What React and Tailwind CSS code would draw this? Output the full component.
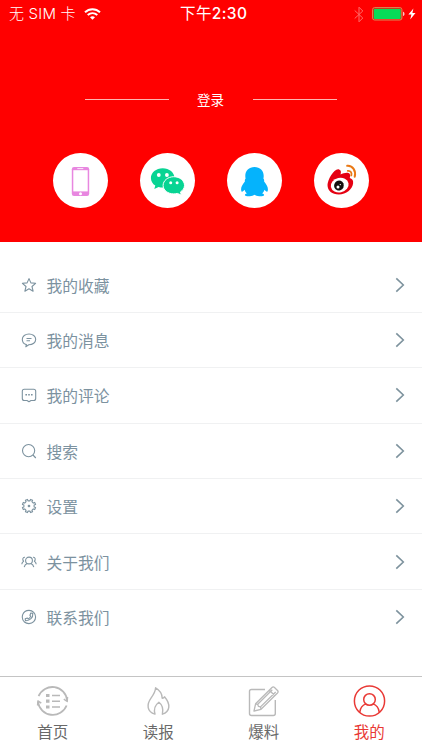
import React from "react";

const font = "font-['Liberation_Sans','Noto_Sans_CJK_SC',sans-serif]";

function StatusBar() {
  return (
    <div className="relative flex h-7 items-center justify-between pl-[9px] pr-[6px] text-white">
      <div className="flex items-center gap-2">
        <span className="whitespace-pre font-['Inter','Noto_Sans_CJK_SC',sans-serif] text-[15px] font-light leading-7 tracking-[0.2px]">无 SIM 卡</span>
        <svg width="17" height="12" viewBox="0 0 17 12" fill="none" stroke="white" strokeWidth="2">
          <path d="M1 4.3C5.2.2 11.8.2 16 4.3" />
          <path d="M3.7 7.1c2.8-2.6 6.8-2.6 9.6 0" />
          <path d="M6 9.3c1.5-1.3 3.5-1.3 5 0L8.5 11.8Z" fill="white" stroke="none" />
        </svg>
      </div>
      <div className="absolute left-[180px] whitespace-nowrap font-['Inter','Noto_Sans_CJK_SC',sans-serif] text-[15.5px] font-medium leading-7 tracking-[0.4px]">
        <span className="font-normal">下午</span>2:30
      </div>
      <div className="flex items-center">
        <svg width="10" height="17" viewBox="0 0 10 17" fill="none" stroke="#ff6b68" strokeWidth="1">
          <path d="M.7 4.5 8.8 12 5 15.8V1.2L8.8 5 .7 12.5" />
        </svg>
        <svg className="ml-[8px]" width="33" height="14" viewBox="0 0 33 14">
          <rect x=".6" y=".6" width="29.3" height="12.4" rx="2" fill="#ff0000" stroke="#d98c57" />
          <rect x="1.7" y="1.7" width="27.1" height="10.2" rx="1" fill="#06dc58" />
          <path d="M31 4.7c2 .5 2 3.9 0 4.4Z" fill="#ffc9c3" />
        </svg>
        <svg className="ml-[3px]" width="8" height="12" viewBox="0 0 8 12" fill="white">
          <path d="M5.4.5.4 6.6h3L2.2 11.5 7.5 5H4.4Z" />
        </svg>
      </div>
    </div>
  );
}

function PhoneIcon() {
  return (
    <svg className="h-full w-full" viewBox="0 0 55 55">
      <rect x="18.8" y="14" width="17.4" height="29" rx="2.2" fill="#e887e0" />
      <rect x="20.3" y="17.2" width="14.4" height="21.2" fill="white" />
      <path d="M24.3 15.6h6" stroke="white" strokeWidth=".8" />
      <circle cx="27.5" cy="40.8" r="1.5" fill="white" />
    </svg>
  );
}

function WechatIcon() {
  return (
    <svg className="h-full w-full" viewBox="0 0 55 55">
      <path d="M22.7 15.2c-6.6 0-11.8 4.3-11.8 9.7 0 3.2 1.7 5.9 4.4 7.6l-1 3.5 4.3-2.1c7.2 2.2 15.9-1.7 15.9-9 0-5.4-5.2-9.7-11.8-9.7Z" fill="#08d493" />
      <path d="M33.8 23.7c-5.9 0-10.7 3.9-10.7 8.7s4.8 8.5 10.7 8.5c1.4 0 2.5-.2 3.5-.5l4.1 1.7-.9-3.2c2.4-1.5 4-3.8 4-6.5 0-4.8-4.8-8.7-10.7-8.7Z" fill="#08d493" stroke="white" strokeWidth="1" />
      <circle cx="18.8" cy="22" r="1.9" fill="white" />
      <circle cx="26.9" cy="22" r="1.9" fill="white" />
      <circle cx="30.7" cy="29.8" r="1.5" fill="white" />
      <circle cx="37.1" cy="29.8" r="1.5" fill="white" />
    </svg>
  );
}

function QQIcon() {
  return (
    <svg className="h-full w-full" viewBox="0 0 55 55">
      <path d="M27.5 14c-5.5 0-9.2 3.5-9.2 8.8 0 1.1.1 2 .3 2.7-.8.9-.9 2-.7 3.1-2.3 2.6-4 5.7-3.8 8.1.1 1.6.7 2.3 1.5 1.9.7-.3 1.4-1 1.9-1.8.4 1.5 1.2 2.8 2.3 3.8-1.4.4-2.1 1-1.8 1.7.3 1 2.6 1.2 4.8 1 2-.1 3.7-.7 4.7-1.5 1 .8 2.7 1.4 4.7 1.5 2.2.2 4.5 0 4.8-1 .3-.7-.4-1.3-1.8-1.7 1.1-1 1.9-2.3 2.3-3.8.5.8 1.2 1.5 1.9 1.8.8.4 1.4-.3 1.5-1.9.2-2.4-1.5-5.5-3.8-8.1.2-1.1.1-2.2-.7-3.1.2-.7.3-1.6.3-2.7 0-5.3-3.7-8.8-9.2-8.8Z" fill="#05b3fc" />
    </svg>
  );
}

function WeiboIcon() {
  return (
    <svg className="h-full w-full" viewBox="0 0 55 55">
      <path d="M25.1 16.4c2 .6 2.2 2.6 1.4 5.1 3.2-1.5 7.5-2.6 9.1-.7.9 1.1.7 2.8.1 4.3 2.3.7 3.9 2.2 3.4 5.5-.9 6-6.8 10.9-14.3 10.9-6.6 0-11.3-3.5-11.3-9.4 0-5.6 7-17.5 11.6-15.7Z" fill="#e50012" />
      <ellipse cx="25.7" cy="32.1" rx="9" ry="7.2" fill="white" transform="rotate(-12 26 32.1)" />
      <ellipse cx="24.9" cy="32.6" rx="4.8" ry="5.1" fill="#14100f" transform="rotate(20 25.1 32.6)" />
      <circle cx="24" cy="34" r="1.5" fill="white" />
      <circle cx="26.3" cy="31.6" r=".7" fill="white" />
      <g fill="none" stroke="#e97916" strokeLinecap="round">
        <path d="M33.2 12.8c5.5-.5 9.1 4.9 7.5 11" strokeWidth="2" />
        <path d="M33.8 17.9c2.8-.4 4.3 1.9 3.5 4.5" strokeWidth="1.8" />
      </g>
    </svg>
  );
}

const logins = [PhoneIcon, WechatIcon, QQIcon, WeiboIcon];

const menu = [
  {
    label: "我的收藏",
    icon: <path d="m8 1.6 1.9 4.3 4.7.4-3.6 3.2 1.1 4.7L8 11.8l-4.1 2.4L5 9.500 1.400 6.300l4.700-.4Z" />,
  },
  {
    label: "我的消息",
    icon: (
      <>
        <path d="M8 2C4.200 2 1.300 4.300 1.300 7.300c0 2.900 2.200 4.900 4.100 5.300l-.6 2.200 3-2c4 0 6.900-2.300 6.900-5.500C14.700 4.300 11.800 2 8 2Z" />
        <path d="M5.500 6.500h5M5.500 8.800H9" />
      </>
    ),
  },
  {
    label: "我的评论",
    icon: (
      <>
        <path d="M3.300 2.300h9.400q2 0 2 2v7.200q0 2-2 2H10L8 14.700l-2-1.200H3.300q-2 0-2-2V4.300q0-2 2-2Z" />
        <path d="M4.400 7.700H6M7.200 7.700h1.600M10 7.700h1.600" strokeWidth="1.400" />
      </>
    ),
  },
  {
    label: "搜索",
    icon: (
      <>
        <circle cx="7.600" cy="7.600" r="6.100" />
        <path d="m12 12 2.800 3" />
      </>
    ),
  },
  {
    label: "设置",
    icon: (
      <>
        <path d="m6.500 1.400.5 1.500h2l.5-1.500 2.100.9-.7 1.400 1.400 1.400 1.400-.7.9 2.100-1.500.5v2l1.500.5-.9 2.100-1.400-.7-1.400 1.400.7 1.400-2.100.9-.5-1.500H7l-.5 1.500-2.100-.9.7-1.400-1.400-1.400-1.400.7-.9-2.100L2.900 9V7l-1.500-.5.9-2.100 1.400.7 1.400-1.400-.7-1.400Z" />
        <circle cx="8" cy="8" r=".8" />
      </>
    ),
  },
  {
    label: "关于我们",
    icon: (
      <>
        <circle cx="8" cy="6.500" r="3.400" />
        <path d="M3.200 13.200c.4-2.100 1.500-3.200 3-3.700M12.800 13.200c-.4-2.100-1.500-3.200-3-3.700M4 3.300C1.700 3 1.100 5.800 2.600 7.200 1.400 7.900.9 8.800.8 10.200M12 3.300c2.300-.3 2.900 2.500 1.400 3.900 1.200.7 1.700 1.600 1.800 3" />
      </>
    ),
  },
  {
    label: "联系我们",
    icon: (
      <>
        <path d="M3.500 13C-.6 9 1.300 1.400 8 1.400c3.800 0 6.600 2.900 6.600 6.600S11.800 14.600 8 14.600c-2 0-3.400-.6-4.500-1.600Z" />
        <path d="m9.800 4 2 .2c.5 4.500-3 7.700-7.300 7.500l-.3-1.900 2.200-.8.8.9c1.300-.6 2.100-1.500 2.500-2.700l-.8-.8Z" />
      </>
    ),
  },
];

const tabs = [
  {
    label: "首页",
    icon: (
      <>
        <path d="M2.600 11.200A14.900 14.900 0 0 1 31.200 15.500M30.600 20.500A14.900 14.900 0 0 1 2 17" strokeWidth="1.800" />
        <path d="m27.800 14.200 3.400 2.300.3-4.500M5.300 18.200 1.900 16l-.3 4.500" strokeWidth="1.500" />
        <path d="M10 10.500h3.500M10 16.200h3.500M10 22h3.500" strokeWidth="3.200" />
        <path d="M16 10.500h8M16 16.200h8M16 22h8" strokeWidth="1.500" />
      </>
    ),
  },
  {
    label: "读报",
    icon: (
      <path d="M13 29.200C4.700 26.500 4.500 19.500 9 13.200c3-4.200 4.500-6.600 4.600-10.400 4.500 2.600 6.600 6.200 6.600 10.400 1.100-.2 1.900-.7 2.300-1.400 6.500 7.500 5.600 14.900-2.100 17.400 1-4.600-.2-9.500-3.500-12-3.700 2.700-5.200 7.400-3.900 12Z" strokeWidth="1.400" />
    ),
  },
  {
    label: "爆料",
    icon: (
      <>
        <path d="M18 4.500H4.500q-2 0-2 2v22q0 2 2 2h21.800q2 0 2-2V15" strokeWidth="1.400" />
        <path d="m7 26 1.600-7.200L25 2.500q1.200-1.200 2.500 0l3 3q1.200 1.200 0 2.500L14 24.300ZM8.600 18.800l2.100.5.7 2.100 2.100.5.5 2.400M10.700 19.300 25.300 4.700M13.500 21.900 28.700 7M22.300 5.200l5.700 5.600" strokeWidth="1.300" />
      </>
    ),
  },
  {
    label: "我的",
    active: true,
    icon: (
      <>
        <circle cx="16.500" cy="16" r="15.100" strokeWidth="1.500" />
        <circle cx="16.500" cy="14.500" r="5.800" strokeWidth="1.500" />
        <path d="M6.700 27.400c.5-4.300 3-7.500 6.500-8.500M26.300 27.400c-.5-4.300-3-7.500-6.500-8.500" strokeWidth="1.500" />
      </>
    ),
  },
];

export default function App() {
  return (
    <div className={`flex h-[750px] w-[422px] flex-col overflow-hidden bg-white ${font}`}>
      <header className="h-[241.5px] shrink-0 bg-[#ff0000]">
        <StatusBar />
        <div className="mt-[61px] flex h-5 items-center justify-center gap-7 text-white">
          <span className="h-px w-[84px] bg-[#ffb5b0]" />
          <span className="w-7 whitespace-nowrap pt-[3px] text-[13.5px] leading-5">登录</span>
          <span className="h-px w-[84px] bg-[#ffb5b0]" />
        </div>
        <div className="mt-[44px] flex justify-center gap-8">
          {logins.map((Icon, i) => (
            <div key={i} className="size-[55px] rounded-full bg-white">
              <Icon />
            </div>
          ))}
        </div>
      </header>

      <ul className="mt-4 flex-1">
        {menu.map(({ label, icon }) => (
          <li key={label} className="flex h-[55.4px] items-center border-b border-[#f0f1f2] pl-[20.5px] pr-[17px] text-[#7c929f] last:border-transparent">
            <svg width="16" height="16" viewBox="0 0 16 16" fill="none" stroke="currentColor" strokeWidth="1.1" strokeLinejoin="round">
              {icon}
            </svg>
            <span className="ml-[10px] flex-1 pt-1 text-[15.75px] leading-6">{label}</span>
            <svg width="10" height="16" viewBox="0 0 10 16" fill="none" stroke="#7d929d" strokeWidth="1.6">
              <path d="m1.3 1.3 7 6.7-7 6.7" />
            </svg>
          </li>
        ))}
      </ul>

      <nav className="grid h-[74.5px] shrink-0 grid-cols-4 border-t-[1.5px] border-[#c4c4c4] pt-2">
        {tabs.map(({ label, icon, active }) => (
          <div key={label} className={`flex flex-col items-center ${active ? "text-[#e93935]" : "text-[#696969]"}`}>
            <svg className={active ? "text-[#e93935]" : "text-[#b9b9b9]"} width="33" height="32" viewBox="0 0 33 32" fill="none" stroke="currentColor" strokeLinejoin="round">
              {icon}
            </svg>
            <span className="mt-1 text-[15.5px] leading-6">{label}</span>
          </div>
        ))}
      </nav>
    </div>
  );
}
